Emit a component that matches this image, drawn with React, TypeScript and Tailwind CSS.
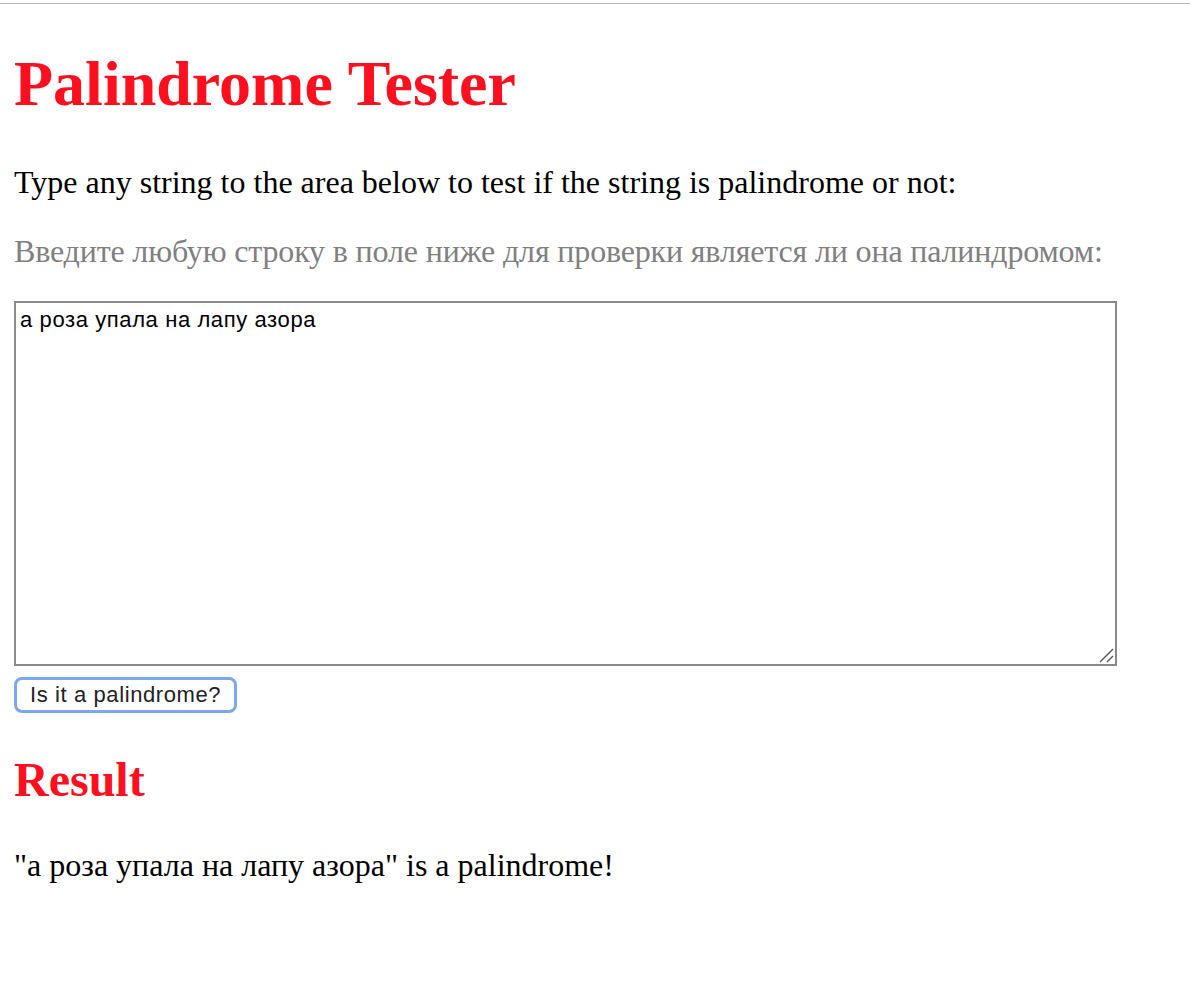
import React, { useState } from 'react';

const isPalindrome = (text: string) => {
  const clean = text.toLowerCase().replace(/[^a-zа-яё0-9]/g, '');
  return clean.length > 0 && clean === clean.split('').reverse().join('');
};

const App = () => {
  const [value, setValue] = useState('а роза упала на лапу азора');
  const [checked, setChecked] = useState('а роза упала на лапу азора');

  return (
    <div className="min-h-screen bg-white font-['Liberation_Serif','Times_New_Roman',serif] text-black">
      {/* window edge */}
      <div className="h-[3px]" />
      <div className="h-px bg-[#b8b8b8]" />

      <div className="px-[14px]">
        <h1 className="mt-[43px] mb-[43px] text-[64px] leading-[74px] font-bold text-[#fc0f1e]">
          Palindrome Tester
        </h1>
        <p className="text-[32px] leading-[37px]">
          Type any string to the area below to test if the string is palindrome or not:
        </p>
        <p className="mt-[32px] text-[32px] leading-[37px] tracking-[-0.16px] text-[#808080]">
          Введите любую строку в поле ниже для проверки является ли она палиндромом:
        </p>

        <div className="mt-[31px] flex flex-col items-start">
          <div className="relative">
            <textarea
              value={value}
              onChange={e => setValue(e.target.value)}
              spellCheck={false}
              className="block w-[1103px] h-[365px] border-2 border-[#8a8a8a] px-[4px] py-[4px] text-[22px] leading-[26px] tracking-[0.6px] text-black outline-none resize-none font-['Liberation_Sans',Arial,sans-serif]"
            />
            {/* resize grip */}
            <svg
              className="pointer-events-none absolute right-[3px] bottom-[3px]"
              width="16"
              height="16"
              viewBox="0 0 16 16"
            >
              <path d="M2 15 L15 2 M9 15 L15 9" stroke="#555" strokeWidth="1.4" />
            </svg>
          </div>
          <button
            onClick={() => setChecked(value)}
            className="mt-[11px] h-[36px] rounded-[8px] border-[3px] border-[#7aa8f0] bg-white px-[13px] text-[22px] leading-none tracking-[0.6px] text-[#222] font-['Liberation_Sans',Arial,sans-serif]"
          >
            Is it a palindrome?
          </button>
        </div>

        <h2 className="mt-[39px] text-[48px] leading-[55px] font-bold text-[#fc0f1e]">Result</h2>
        <p className="mt-[40px] text-[32px] leading-[37px]">
          "{checked}" is {isPalindrome(checked) ? 'a palindrome!' : 'not a palindrome.'}
        </p>
      </div>
    </div>
  );
};

export default App;
